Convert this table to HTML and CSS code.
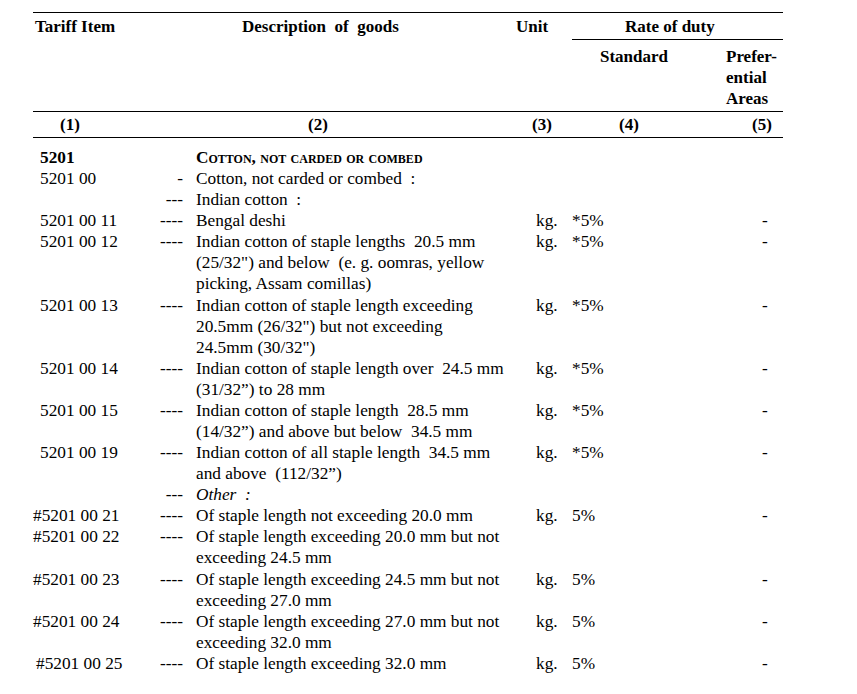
FILE: index.html
```html
<!DOCTYPE html>
<html lang="en">
<head>
<meta charset="utf-8">
<title>Tariff – Chapter 52, Cotton</title>
<link rel="stylesheet" href="styles.css">
</head>
<body>
<div class="page">
  <div class="head">
    <div class="h h-item">Tariff Item</div>
    <div class="h h-desc">Description&nbsp; of&nbsp; goods</div>
    <div class="h h-unit">Unit</div>
    <div class="h h-rate">Rate of duty</div>
    <div class="h h-std">Standard</div>
    <div class="h h-pref">Prefer-<br>ential<br>Areas</div>
  </div>
  <div class="nums">
    <div class="n n1">(1)</div>
    <div class="n n2">(2)</div>
    <div class="n n3">(3)</div>
    <div class="n n4">(4)</div>
    <div class="n n5">(5)</div>
  </div>
  <div class="body">
    <div class="row"><div class="code bold">5201</div><div class="dash"></div><div class="desc heading">Cotton, not carded or combed</div><div class="unit"></div><div class="rate"></div><div class="pref"></div></div>
    <div class="row"><div class="code">5201 00</div><div class="dash">-</div><div class="desc">Cotton, not carded or combed  :</div><div class="unit"></div><div class="rate"></div><div class="pref"></div></div>
    <div class="row"><div class="code"></div><div class="dash">---</div><div class="desc">Indian cotton  :</div><div class="unit"></div><div class="rate"></div><div class="pref"></div></div>
    <div class="row"><div class="code">5201 00 11</div><div class="dash">----</div><div class="desc">Bengal deshi</div><div class="unit">kg.</div><div class="rate">*5%</div><div class="pref">-</div></div>
    <div class="row"><div class="code">5201 00 12</div><div class="dash">----</div><div class="desc">Indian cotton of staple lengths  20.5 mm<br>(25/32") and below  (e. g. oomras, yellow<br>picking, Assam comillas)</div><div class="unit">kg.</div><div class="rate">*5%</div><div class="pref">-</div></div>
    <div class="row"><div class="code">5201 00 13</div><div class="dash">----</div><div class="desc">Indian cotton of staple length exceeding<br>20.5mm (26/32") but not exceeding<br>24.5mm (30/32")</div><div class="unit">kg.</div><div class="rate">*5%</div><div class="pref">-</div></div>
    <div class="row"><div class="code">5201 00 14</div><div class="dash">----</div><div class="desc">Indian cotton of staple length over  24.5 mm<br>(31/32”) to 28 mm</div><div class="unit">kg.</div><div class="rate">*5%</div><div class="pref">-</div></div>
    <div class="row"><div class="code">5201 00 15</div><div class="dash">----</div><div class="desc">Indian cotton of staple length  28.5 mm<br>(14/32”) and above but below  34.5 mm</div><div class="unit">kg.</div><div class="rate">*5%</div><div class="pref">-</div></div>
    <div class="row"><div class="code">5201 00 19</div><div class="dash">----</div><div class="desc">Indian cotton of all staple length  34.5 mm<br>and above  (112/32”)</div><div class="unit">kg.</div><div class="rate">*5%</div><div class="pref">-</div></div>
    <div class="row"><div class="code"></div><div class="dash">---</div><div class="desc italic">Other  :</div><div class="unit"></div><div class="rate"></div><div class="pref"></div></div>
    <div class="row"><div class="code hash">#5201 00 21</div><div class="dash">----</div><div class="desc">Of staple length not exceeding 20.0 mm</div><div class="unit">kg.</div><div class="rate">5%</div><div class="pref">-</div></div>
    <div class="row"><div class="code hash">#5201 00 22</div><div class="dash">----</div><div class="desc">Of staple length exceeding 20.0 mm but not<br>exceeding 24.5 mm</div><div class="unit"></div><div class="rate"></div><div class="pref"></div></div>
    <div class="row"><div class="code hash">#5201 00 23</div><div class="dash">----</div><div class="desc">Of staple length exceeding 24.5 mm but not<br>exceeding 27.0 mm</div><div class="unit">kg.</div><div class="rate">5%</div><div class="pref">-</div></div>
    <div class="row"><div class="code hash">#5201 00 24</div><div class="dash">----</div><div class="desc">Of staple length exceeding 27.0 mm but not<br>exceeding 32.0 mm</div><div class="unit">kg.</div><div class="rate">5%</div><div class="pref">-</div></div>
    <div class="row"><div class="code hash last">#5201 00 25</div><div class="dash">----</div><div class="desc">Of staple length exceeding 32.0 mm</div><div class="unit">kg.</div><div class="rate">5%</div><div class="pref">-</div></div>
  </div>
</div>
</body>
</html>
```
FILE: styles.css
```css
html, body {
  margin: 0;
  padding: 0;
  background: #ffffff;
}

body {
  font-family: "Liberation Serif", "Times New Roman", serif;
  color: #000000;
}

.page {
  width: 750px;
  margin: 12px 0 0 33px;
}

/* ---------- header ---------- */
.head {
  display: grid;
  grid-template-columns: 117px 350px 72px 148px 63px;
  grid-template-rows: auto auto;
  border-top: 1px solid #000;
  border-bottom: 1px solid #000;
  font-weight: bold;
  font-size: 17px;
  line-height: 21px;
}

.h {
  white-space: nowrap;
}

.h-item {
  grid-column: 1;
  grid-row: 1 / span 2;
  padding: 3px 0 0 2px;
}

.h-desc {
  grid-column: 2;
  grid-row: 1 / span 2;
  padding: 3px 0 0 92px;
}

.h-unit {
  grid-column: 3;
  grid-row: 1 / span 2;
  padding: 3px 0 0 16px;
}

.h-rate {
  grid-column: 4 / span 2;
  grid-row: 1;
  padding: 3px 0 2px 53px;
  border-bottom: 1px solid #000;
}

.h-std {
  grid-column: 4;
  grid-row: 2;
  padding: 6px 0 2px 28px;
}

.h-pref {
  grid-column: 5;
  grid-row: 2;
  padding: 6px 0 2px 6px;
}

.nums {
  display: grid;
  grid-template-columns: 117px 350px 72px 148px 63px;
  border-bottom: 1px solid #000;
  font-weight: bold;
  font-size: 17px;
  line-height: 21px;
  padding: 2px 0 2px;
}

.n1 { padding-left: 27px; }
.n2 { padding-left: 158px; }
.n3 { padding-left: 32px; }
.n4 { padding-left: 47px; }
.n5 { padding-left: 32px; }

/* ---------- body ---------- */
.body {
  padding-top: 9px;
  font-size: 17.3px;
  line-height: 21.08px;
}

.row {
  display: grid;
  grid-template-columns: 117px 34px 346px 40px 150px 63px;
}

.row > div {
  white-space: pre;
}

.code {
  padding-left: 7px;
}

.code.hash {
  padding-left: 0;
}

.code.hash.last {
  padding-left: 3px;
}

.bold {
  font-weight: bold;
}

.dash {
  text-align: right;
  padding-right: 1px;
}

.desc {
  padding-left: 12px;
}

.heading {
  font-weight: bold;
  font-variant: small-caps;
}

.italic {
  font-style: italic;
}

.unit {
  padding-left: 6px;
}

.rate {
  padding-left: 2px;
}

.pref {
  padding-left: 42px;
}
```
